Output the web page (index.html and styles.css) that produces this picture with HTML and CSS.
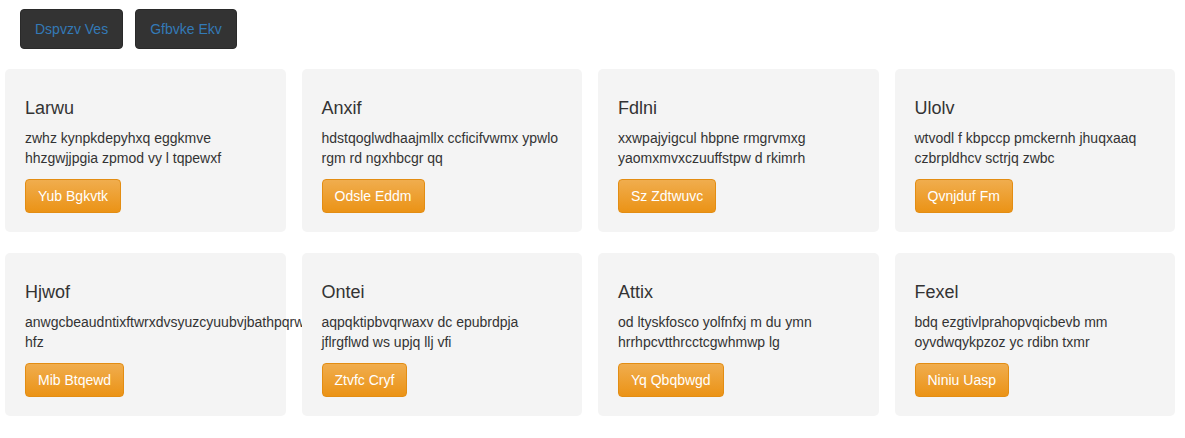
FILE: index.html
```html
<!DOCTYPE html>
<html>
<head>
<meta charset="utf-8">
<link rel="stylesheet" href="styles.css">
</head>
<body>
<div class="toolbar">
  <button class="tbtn">Dspvzv Ves</button>
  <button class="tbtn">Gfbvke Ekv</button>
</div>
<div class="grid">
  <div class="card"><h3>Larwu</h3><p>zwhz kynpkdepyhxq eggkmve hhzgwjjpgia zpmod vy l tqpewxf</p><button class="obtn">Yub Bgkvtk</button></div>
  <div class="card"><h3>Anxif</h3><p>hdstqoglwdhaajmllx ccficifvwmx ypwlo rgm rd ngxhbcgr qq</p><button class="obtn">Odsle Eddm</button></div>
  <div class="card"><h3>Fdlni</h3><p>xxwpajyigcul hbpne rmgrvmxg yaomxmvxczuuffstpw d rkimrh</p><button class="obtn">Sz Zdtwuvc</button></div>
  <div class="card"><h3>Ulolv</h3><p>wtvodl f kbpccp pmckernh jhuqxaaq czbrpldhcv sctrjq zwbc</p><button class="obtn">Qvnjduf Fm</button></div>
  <div class="card"><h3>Hjwof</h3><p>anwgcbeaudntixftwrxdvsyuzcyuubvjbathpqrw hfz</p><button class="obtn">Mib Btqewd</button></div>
  <div class="card"><h3>Ontei</h3><p>aqpqktipbvqrwaxv dc epubrdpja jflrgflwd ws upjq llj vfi</p><button class="obtn">Ztvfc Cryf</button></div>
  <div class="card"><h3>Attix</h3><p>od ltyskfosco yolfnfxj m du ymn hrrhpcvtthrcctcgwhmwp lg</p><button class="obtn">Yq Qbqbwgd</button></div>
  <div class="card"><h3>Fexel</h3><p>bdq ezgtivlprahopvqicbevb mm oyvdwqykpzoz yc rdibn txmr</p><button class="obtn">Niniu Uasp</button></div>
</div>
</body>
</html>
```
FILE: styles.css
```css
html, body {
  margin: 0;
  padding: 0;
  background: #fff;
  font-family: "Liberation Sans", Arial, sans-serif;
  font-size: 14px;
  line-height: 20px;
  color: #333;
}
.toolbar {
  display: flex;
  gap: 12px;
  padding: 9px 0 0 20px;
}
.tbtn {
  background: #333;
  color: #337ab7;
  border: 1px solid #2a2a2a;
  border-radius: 4px;
  font-family: inherit;
  font-size: 14px;
  line-height: 20px;
  padding: 9px 14px;
  cursor: pointer;
}
.grid {
  display: grid;
  grid-template-columns: repeat(4, 1fr);
  column-gap: 16px;
  row-gap: 21px;
  margin-top: 20px;
  padding: 0 10px 0 5px;
}
.card {
  background: #f4f4f4;
  border-radius: 5px;
  padding: 19px 20px 19px;
  min-width: 0;
}
.card h3 {
  margin: 11px 0 9px;
  font-size: 18px;
  font-weight: normal;
  line-height: 1.1;
  color: #333;
}
.card p {
  margin: 0 0 11px;
}
.obtn {
  display: inline-block;
  font-family: inherit;
  font-size: 14px;
  line-height: 20px;
  padding: 6px 12px;
  color: #fff;
  border: 1px solid #e38d13;
  border-radius: 4px;
  background: linear-gradient(to bottom, #f0ad4e 0%, #eb9316 100%);
  cursor: pointer;
}
```
